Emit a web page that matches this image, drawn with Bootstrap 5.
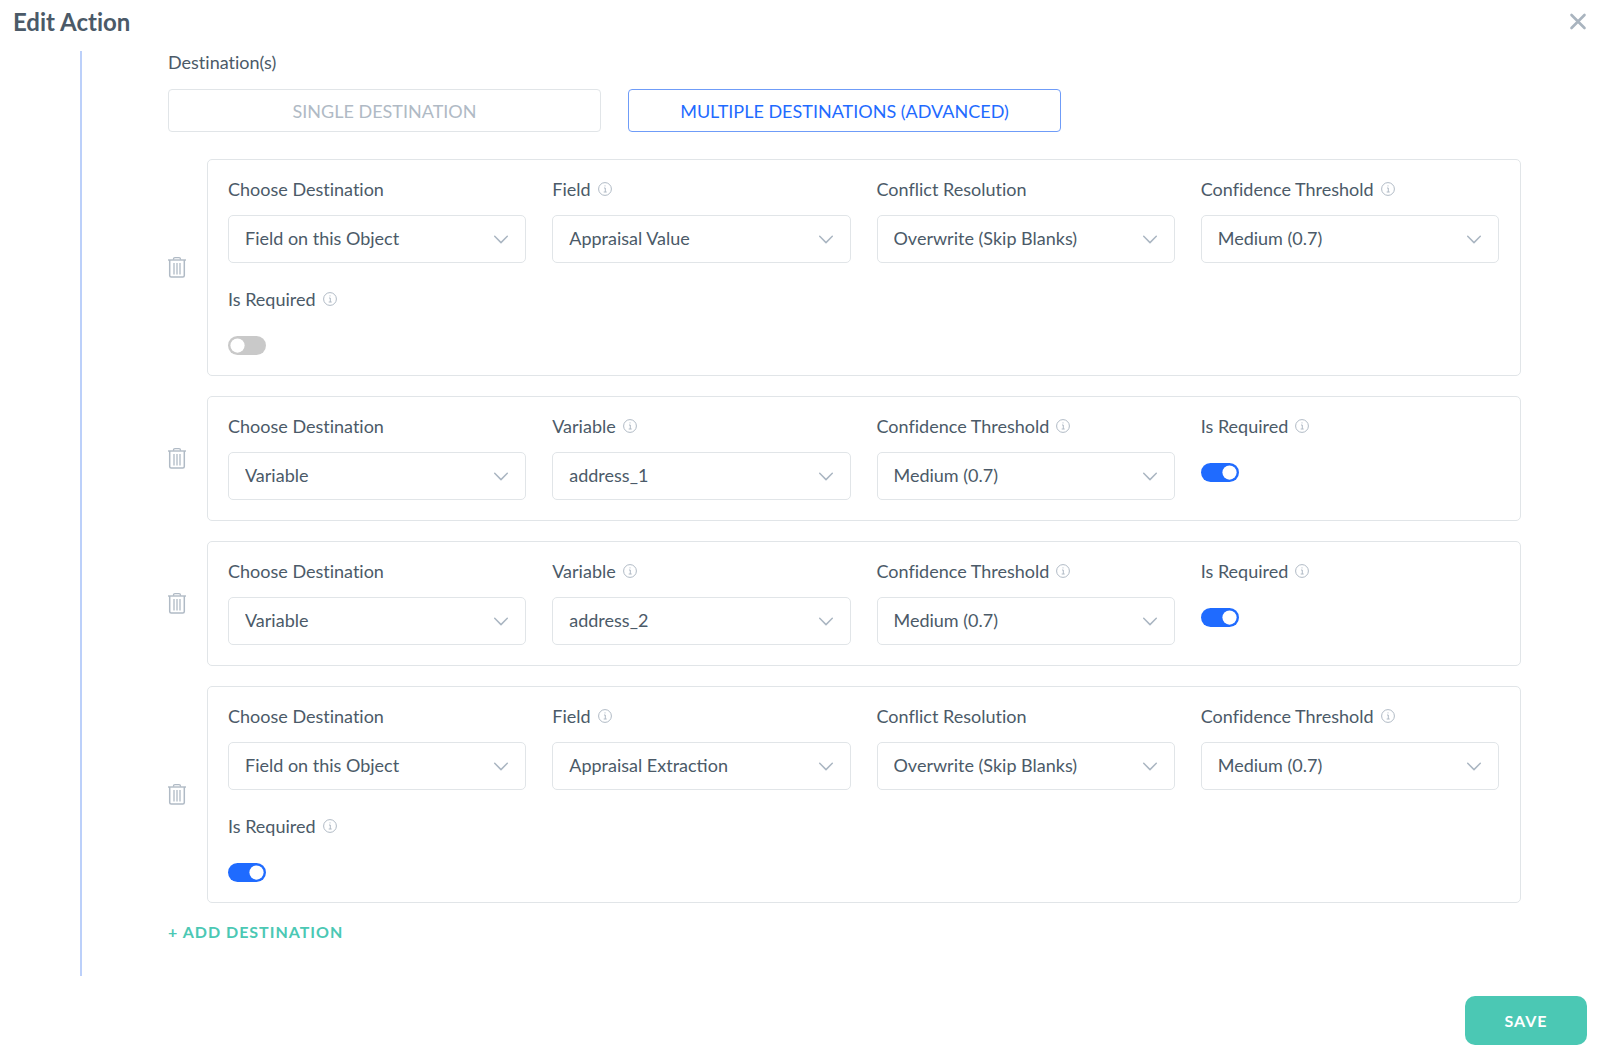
<!DOCTYPE html>
<html lang="en">
<head>
<meta charset="utf-8">
<meta name="viewport" content="width=device-width, initial-scale=1">
<title>Edit Action</title>
<link href="https://cdn.jsdelivr.net/npm/bootstrap@5.3.0/dist/css/bootstrap.min.css" rel="stylesheet">
<style>
  :root { --ink: #4b5a68; --muted: #b0bac5; --line: #e1e5e8; --blue: #1f6bff; --teal: #4bc8b4; }
  body { font-family: Lato, "Open Sans", sans-serif; font-size: 18px; line-height: 26px; font-variant-ligatures: none; color: var(--ink); background: #fff; }
  .dialog-head { padding: 9px 13px 16px 13px; }
  .dialog-title { font-size: 24px; line-height: 26px; font-weight: 700; }
  .close-btn { color: #a9b4bf; line-height: 0; }
  .dialog-body { margin-left: 80px; padding-left: 86px; padding-right: 79px; border-left: 2px solid #bcd0fa; }
  .body-label { line-height: 22px; }
  .mode-row { width: 66%; gap: 27px; margin-top: 16px; margin-bottom: 27px; }
  .mode-btn { flex: 1 1 0; height: 43px; padding: 2px 0 0; font-size: 18px; border: 1px solid var(--line); border-radius: 4px; color: var(--muted); background: #fff; }
  .mode-btn.active { color: var(--blue); border-color: #6f9cf8; background: #fff; }
  .dest-list { gap: 20px; }
  .dest-row { gap: 21px; }
  .trash-btn { color: var(--muted); line-height: 0; }
  .dest-card { border: 1px solid var(--line); border-radius: 5px; padding: 16px 21px 20px 20px; }
  .dest-grid { --bs-gutter-x: 26px; --bs-gutter-y: 23px; }
  .field-head { gap: 7px; height: 26px; margin-bottom: 13px; }
  .info { width: 14px; height: 14px; color: var(--muted); }
  .pick { height: 48px; padding: 0 44px 2px 16px; font-size: 18px; color: var(--ink); border: 1px solid var(--line); border-radius: 5px;
    background-image: url("data:image/svg+xml,%3Csvg xmlns='http://www.w3.org/2000/svg' viewBox='0 0 16 16'%3E%3Cpath fill='none' stroke='%23aab6c2' stroke-width='1.5' stroke-linecap='round' stroke-linejoin='round' d='M1.7 5.3 8 11.6l6.300-6.300'/%3E%3C/svg%3E");
    background-size: 16px 16px; background-position: right 16px center; }
  .toggle-wrap { padding: 11px 0 0; margin: 0; min-height: 0; line-height: 0; }
  .toggle-wrap .toggle { width: 38px; height: 19px; margin: 0; float: none; border: 0; background-color: #c9c9c9;
    --bs-form-switch-bg: url("data:image/svg+xml,%3Csvg xmlns='http://www.w3.org/2000/svg' viewBox='-4 -4 8 8'%3E%3Ccircle r='3' fill='%23fff'/%3E%3C/svg%3E");
    background-image: var(--bs-form-switch-bg); }
  .toggle-wrap .toggle:checked { background-color: var(--blue); }
  .add-btn { margin-top: 17px; margin-bottom: 30px; font-size: 16px; font-weight: 700; letter-spacing: 1px; color: var(--teal); }
  .dialog-foot { padding: 20px 13px 12px; }
  .save-btn { width: 122px; height: 49px; border-radius: 10px; background: var(--teal); color: #fff; font-size: 16px; font-weight: 700; letter-spacing: 1px; }
</style>
</head>
<body>
<svg class="d-none" aria-hidden="true">
  <symbol id="i-info" viewBox="0 0 14 14"><circle cx="7" cy="7" r="6.400" fill="none" stroke="currentColor" stroke-width="1"/><path d="M6 6h1.300v4M5.700 10h3M6.500 3.900h1" fill="none" stroke="currentColor" stroke-width="1"/></symbol>
  <symbol id="i-trash" viewBox="0 0 18 21"><g fill="none" stroke="currentColor"><path d="M0 3h18" stroke-width="1.400"/><path d="M5.500 2.800V2.200Q5.500.7 7 .7h4q1.500 0 1.500 1.500v.6" stroke-width="1.300"/><path d="M1.700 3v15.500q0 1.500 1.500 1.500h11.600q1.500 0 1.500-1.500V3" stroke-width="1.500"/><path d="M6 6v11.500M9 6v11.500M12 6v11.500" stroke-width="1.300"/></g></symbol>
</svg>
<div class="d-flex flex-column min-vh-100">
  <header class="dialog-head d-flex justify-content-between align-items-start">
    <h1 class="dialog-title m-0">Edit Action</h1>
    <button type="button" class="close-btn btn p-0 border-0" aria-label="Close"><svg width="18" height="24" viewBox="0 0 18 24" fill="none" stroke="currentColor" stroke-width="2.600" stroke-linecap="round"><path d="M2.500 6l13 13M15.500 6l-13 13"/></svg></button>
  </header>

  <main class="dialog-body flex-grow-1">
    <div class="body-label">Destination(s)</div>
    <div class="mode-row d-flex">
      <button type="button" class="mode-btn btn">SINGLE DESTINATION</button>
      <button type="button" class="mode-btn btn active" aria-pressed="true">MULTIPLE DESTINATIONS (ADVANCED)</button>
    </div>

    <div class="dest-list d-flex flex-column">
      <section class="dest-row d-flex align-items-center">
        <button type="button" class="trash-btn btn p-0 border-0" aria-label="Delete destination 1"><svg width="18" height="21"><use href="#i-trash"/></svg></button>
        <div class="dest-card flex-grow-1">
          <div class="dest-grid row row-cols-4">
            <div>
              <div class="field-head d-flex align-items-center"><label for="d1a">Choose Destination</label></div>
              <select id="d1a" class="pick form-select"><option>Field on this Object</option></select>
            </div>
            <div>
              <div class="field-head d-flex align-items-center"><label for="d1b">Field</label><svg class="info"><use href="#i-info"/></svg></div>
              <select id="d1b" class="pick form-select"><option>Appraisal Value</option></select>
            </div>
            <div>
              <div class="field-head d-flex align-items-center"><label for="d1c">Conflict Resolution</label></div>
              <select id="d1c" class="pick form-select"><option>Overwrite (Skip Blanks)</option></select>
            </div>
            <div>
              <div class="field-head d-flex align-items-center"><label for="d1d">Confidence Threshold</label><svg class="info"><use href="#i-info"/></svg></div>
              <select id="d1d" class="pick form-select"><option>Medium (0.7)</option></select>
            </div>
            <div>
              <div class="field-head d-flex align-items-center"><label for="d1e">Is Required</label><svg class="info"><use href="#i-info"/></svg></div>
              <div class="toggle-wrap form-check form-switch"><input id="d1e" class="toggle form-check-input" type="checkbox" role="switch"></div>
            </div>
          </div>
        </div>
      </section>

      <section class="dest-row d-flex align-items-center">
        <button type="button" class="trash-btn btn p-0 border-0" aria-label="Delete destination 2"><svg width="18" height="21"><use href="#i-trash"/></svg></button>
        <div class="dest-card flex-grow-1">
          <div class="dest-grid row row-cols-4">
            <div>
              <div class="field-head d-flex align-items-center"><label for="d2a">Choose Destination</label></div>
              <select id="d2a" class="pick form-select"><option>Variable</option></select>
            </div>
            <div>
              <div class="field-head d-flex align-items-center"><label for="d2b">Variable</label><svg class="info"><use href="#i-info"/></svg></div>
              <select id="d2b" class="pick form-select"><option>address_1</option></select>
            </div>
            <div>
              <div class="field-head d-flex align-items-center"><label for="d2c">Confidence Threshold</label><svg class="info"><use href="#i-info"/></svg></div>
              <select id="d2c" class="pick form-select"><option>Medium (0.7)</option></select>
            </div>
            <div>
              <div class="field-head d-flex align-items-center"><label for="d2d">Is Required</label><svg class="info"><use href="#i-info"/></svg></div>
              <div class="toggle-wrap form-check form-switch"><input id="d2d" class="toggle form-check-input" type="checkbox" role="switch" checked></div>
            </div>
          </div>
        </div>
      </section>

      <section class="dest-row d-flex align-items-center">
        <button type="button" class="trash-btn btn p-0 border-0" aria-label="Delete destination 3"><svg width="18" height="21"><use href="#i-trash"/></svg></button>
        <div class="dest-card flex-grow-1">
          <div class="dest-grid row row-cols-4">
            <div>
              <div class="field-head d-flex align-items-center"><label for="d3a">Choose Destination</label></div>
              <select id="d3a" class="pick form-select"><option>Variable</option></select>
            </div>
            <div>
              <div class="field-head d-flex align-items-center"><label for="d3b">Variable</label><svg class="info"><use href="#i-info"/></svg></div>
              <select id="d3b" class="pick form-select"><option>address_2</option></select>
            </div>
            <div>
              <div class="field-head d-flex align-items-center"><label for="d3c">Confidence Threshold</label><svg class="info"><use href="#i-info"/></svg></div>
              <select id="d3c" class="pick form-select"><option>Medium (0.7)</option></select>
            </div>
            <div>
              <div class="field-head d-flex align-items-center"><label for="d3d">Is Required</label><svg class="info"><use href="#i-info"/></svg></div>
              <div class="toggle-wrap form-check form-switch"><input id="d3d" class="toggle form-check-input" type="checkbox" role="switch" checked></div>
            </div>
          </div>
        </div>
      </section>

      <section class="dest-row d-flex align-items-center">
        <button type="button" class="trash-btn btn p-0 border-0" aria-label="Delete destination 4"><svg width="18" height="21"><use href="#i-trash"/></svg></button>
        <div class="dest-card flex-grow-1">
          <div class="dest-grid row row-cols-4">
            <div>
              <div class="field-head d-flex align-items-center"><label for="d4a">Choose Destination</label></div>
              <select id="d4a" class="pick form-select"><option>Field on this Object</option></select>
            </div>
            <div>
              <div class="field-head d-flex align-items-center"><label for="d4b">Field</label><svg class="info"><use href="#i-info"/></svg></div>
              <select id="d4b" class="pick form-select"><option>Appraisal Extraction</option></select>
            </div>
            <div>
              <div class="field-head d-flex align-items-center"><label for="d4c">Conflict Resolution</label></div>
              <select id="d4c" class="pick form-select"><option>Overwrite (Skip Blanks)</option></select>
            </div>
            <div>
              <div class="field-head d-flex align-items-center"><label for="d4d">Confidence Threshold</label><svg class="info"><use href="#i-info"/></svg></div>
              <select id="d4d" class="pick form-select"><option>Medium (0.7)</option></select>
            </div>
            <div>
              <div class="field-head d-flex align-items-center"><label for="d4e">Is Required</label><svg class="info"><use href="#i-info"/></svg></div>
              <div class="toggle-wrap form-check form-switch"><input id="d4e" class="toggle form-check-input" type="checkbox" role="switch" checked></div>
            </div>
          </div>
        </div>
      </section>
    </div>

    <button type="button" class="add-btn btn p-0 border-0">+ ADD DESTINATION</button>
  </main>

  <footer class="dialog-foot d-flex justify-content-end">
    <button type="button" class="save-btn btn p-0 border-0">SAVE</button>
  </footer>
</div>
<script src="https://cdn.jsdelivr.net/npm/bootstrap@5.3.0/dist/js/bootstrap.bundle.min.js"></script>
</body>
</html>
